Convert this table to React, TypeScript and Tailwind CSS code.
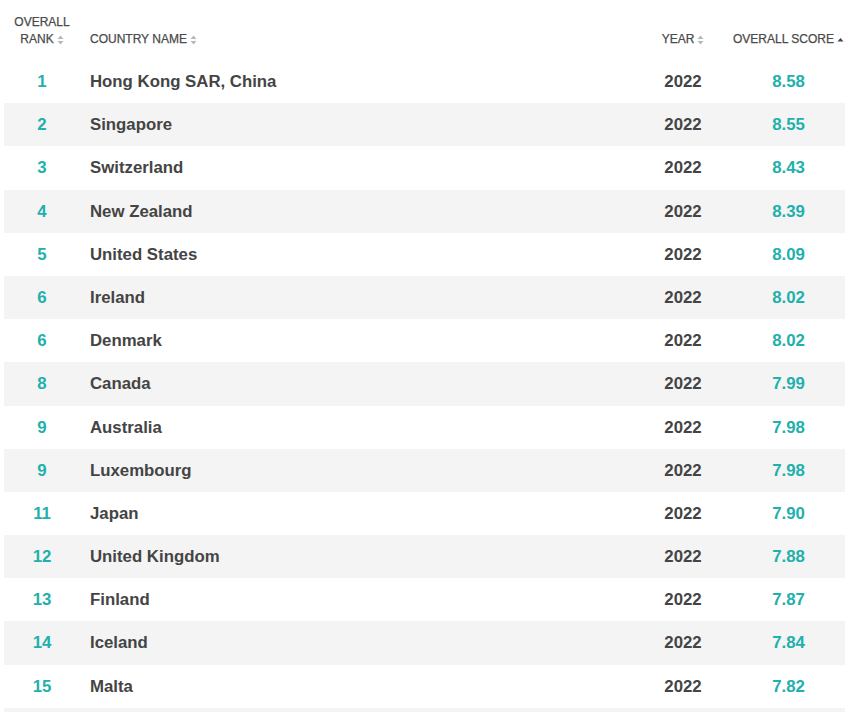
const rows = [
  { rank: 1, country: 'Hong Kong SAR, China', year: 2022, score: '8.58' },
  { rank: 2, country: 'Singapore', year: 2022, score: '8.55' },
  { rank: 3, country: 'Switzerland', year: 2022, score: '8.43' },
  { rank: 4, country: 'New Zealand', year: 2022, score: '8.39' },
  { rank: 5, country: 'United States', year: 2022, score: '8.09' },
  { rank: 6, country: 'Ireland', year: 2022, score: '8.02' },
  { rank: 6, country: 'Denmark', year: 2022, score: '8.02' },
  { rank: 8, country: 'Canada', year: 2022, score: '7.99' },
  { rank: 9, country: 'Australia', year: 2022, score: '7.98' },
  { rank: 9, country: 'Luxembourg', year: 2022, score: '7.98' },
  { rank: 11, country: 'Japan', year: 2022, score: '7.90' },
  { rank: 12, country: 'United Kingdom', year: 2022, score: '7.88' },
  { rank: 13, country: 'Finland', year: 2022, score: '7.87' },
  { rank: 14, country: 'Iceland', year: 2022, score: '7.84' },
  { rank: 15, country: 'Malta', year: 2022, score: '7.82' },
];

function SortBoth() {
  return (
    <svg width="7" height="10" viewBox="0 0 7 10" className="ml-[3px] inline-block">
      <path d="M3.5 0.5 L6.5 4 L0.5 4 Z" fill="#b8b8b8" />
      <path d="M3.5 9.5 L6.5 6 L0.5 6 Z" fill="#b8b8b8" />
    </svg>
  );
}

function SortUp() {
  return (
    <svg width="7" height="10" viewBox="0 0 7 10" className="ml-[3px] inline-block">
      <path d="M3.5 3 L6.5 6.5 L0.5 6.5 Z" fill="#444" />
    </svg>
  );
}

export default function App() {
  return (
    <div className="h-[712px] overflow-hidden bg-white font-['Liberation_Sans',Arial,sans-serif]">
      <div className="pl-1">
        {/* header */}
        <div className="flex h-[60px] items-end pb-[12px] text-[12px] leading-[17px] text-[#4a4a4a] [-webkit-text-stroke:0.25px_#4a4a4a]">
          <div className="w-[76px] text-center">
            OVERALL
            <br />
            RANK
            <SortBoth />
          </div>
          <div className="flex-1 pl-[10px]">
            COUNTRY NAME
            <SortBoth />
          </div>
          <div className="w-[98px] text-center">
            YEAR
            <SortBoth />
          </div>
          <div className="w-[113px] text-center">
            OVERALL SCORE
            <SortUp />
          </div>
        </div>

        {/* rows */}
        {rows.map((r, i) => (
          <div
            key={i}
            className={`flex h-[43.2px] items-center text-[16.8px] font-bold ${i % 2 === 1 ? 'bg-[#f4f4f4]' : 'bg-white'}`}
          >
            <div className="w-[76px] text-center text-[#21b0ac]">{r.rank}</div>
            <div className="flex-1 pl-[10px] text-[#444]">{r.country}</div>
            <div className="w-[98px] text-center text-[#444]">{r.year}</div>
            <div className="w-[113px] text-center text-[#21b0ac]">{r.score}</div>
          </div>
        ))}
        <div className="h-[43.2px] bg-[#f4f4f4]" />
      </div>
    </div>
  );
}
